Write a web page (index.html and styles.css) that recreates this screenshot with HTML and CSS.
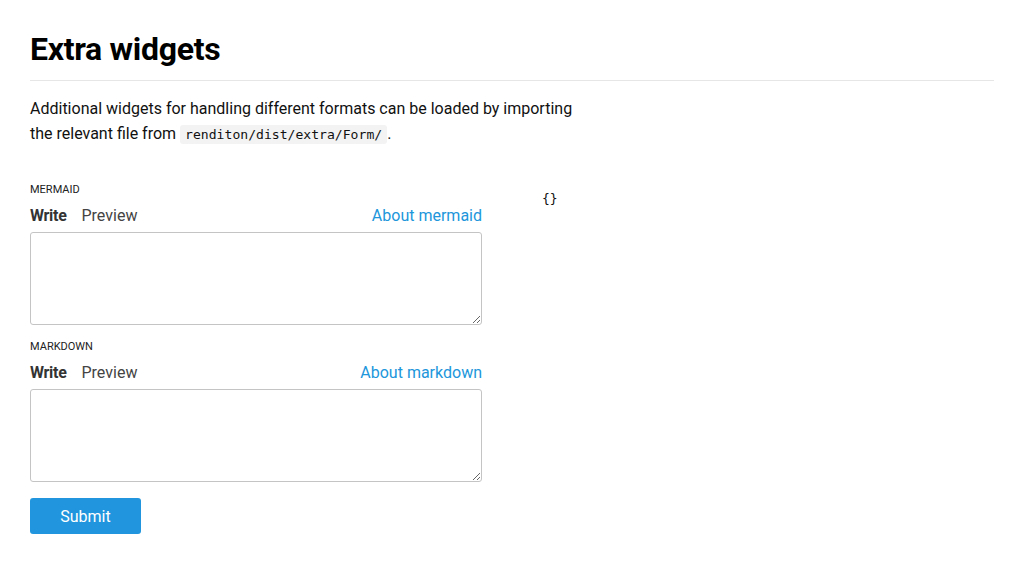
FILE: index.html
```html
<!DOCTYPE html>
<html>
<head>
<meta charset="utf-8">
<link rel="stylesheet" href="styles.css">
</head>
<body>
<main class="page">
  <h1 class="title">Extra widgets</h1>
  <p class="intro">Additional widgets for handling different formats can be loaded by importing the relevant file from <code class="code">renditon/dist/extra/Form/</code>.</p>
  <div class="demo">
    <form class="form">
      <div class="field">
        <label class="label">Mermaid</label>
        <div class="tabs">
          <span class="tab tab-active">Write</span>
          <span class="tab">Preview</span>
          <a class="about" href="#">About mermaid</a>
        </div>
        <textarea class="textarea"></textarea>
      </div>
      <div class="field">
        <label class="label">Markdown</label>
        <div class="tabs">
          <span class="tab tab-active">Write</span>
          <span class="tab">Preview</span>
          <a class="about" href="#">About markdown</a>
        </div>
        <textarea class="textarea"></textarea>
      </div>
      <button class="submit" type="button">Submit</button>
    </form>
    <pre class="output">{}</pre>
  </div>
</main>
</body>
</html>
```

FILE: styles.css
```css
html, body {
  margin: 0;
  padding: 0;
  background: #fff;
}
body {
  font-family: Roboto, "Liberation Sans", sans-serif;
  color: #111;
}
.page {
  padding: 20px 30px;
}
.title {
  font-size: 32px;
  font-weight: 700;
  letter-spacing: -0.3px;
  margin: 10px 0 0;
  padding-bottom: 12px;
  border-bottom: 1px solid #e6e6e6;
  line-height: 38px;
  color: #000;
}
.intro {
  font-size: 16px;
  line-height: 25px;
  max-width: 550px;
  margin: 15px 0 0;
}
.code {
  font-family: "DejaVu Sans Mono", monospace;
  font-size: 13.1px;
  background: #f3f3f3;
  padding: 2px 5px;
  border-radius: 3px;
}
.demo {
  display: grid;
  grid-template-columns: 452px 1fr;
  gap: 60px;
  margin-top: 36px;
}
.form {
  display: flex;
  flex-direction: column;
}
.field {
  display: flex;
  flex-direction: column;
  margin-bottom: 15px;
}
.label {
  font-size: 11px;
  text-transform: uppercase;
  color: #222;
  line-height: 13px;
}
.tabs {
  display: flex;
  align-items: center;
  gap: 15px;
  margin-top: 10px;
  margin-bottom: 6px;
  font-size: 16px;
  line-height: 20px;
}
.tab {
  color: #444;
}
.tab-active {
  font-weight: 700;
  letter-spacing: -0.3px;
  color: #333;
}
.about {
  margin-left: auto;
  color: #2196db;
  text-decoration: none;
}
.textarea {
  box-sizing: border-box;
  width: 452px;
  height: 93px;
  border: 1px solid #c4c4c4;
  border-radius: 3px;
  margin: 0;
  padding: 6px;
  font-family: inherit;
}
.submit {
  align-self: flex-start;
  width: 111px;
  height: 36px;
  background: #2196de;
  color: #fff;
  border: none;
  border-radius: 3px;
  font-family: inherit;
  font-size: 16px;
  margin-top: 1px;
}
.output {
  margin: 8px 0 0;
  font-family: "DejaVu Sans Mono", monospace;
  font-size: 13px;
  color: #111;
}
```
